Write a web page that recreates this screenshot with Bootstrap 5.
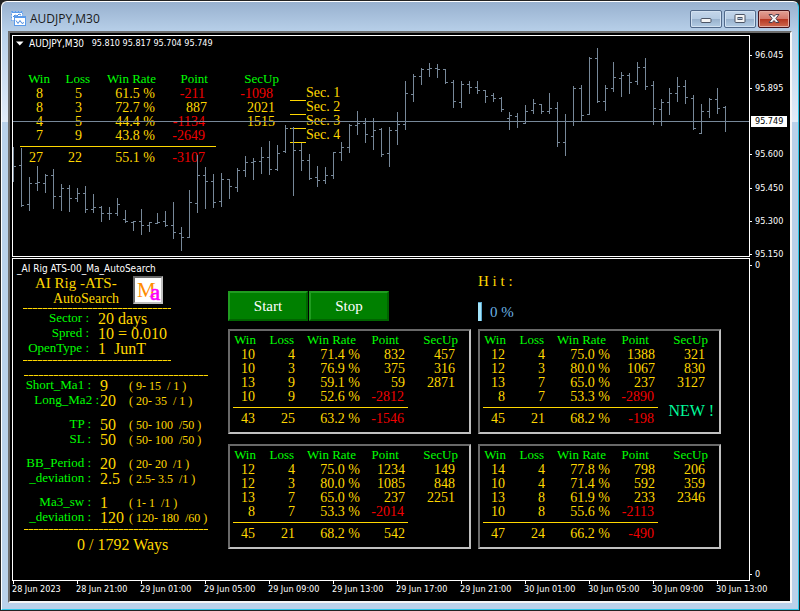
<!DOCTYPE html>
<html lang="en">
<head>
<meta charset="utf-8">
<meta name="viewport" content="width=device-width, initial-scale=1">
<title>AUDJPY,M30</title>
<link href="https://cdn.jsdelivr.net/npm/bootstrap@5.3.0/dist/css/bootstrap.min.css" rel="stylesheet">
<style>
  :root { --gold: #ffd700; --lime: #00ff00; --loss: #f00000; }
  body { background: #000; color: #fff; font-family: "Liberation Serif", "Times New Roman", serif; font-size: 14px; line-height: 14px; }
  .mdi { min-height: 100vh; padding: 1px 1px 1px; background: #222; }
  .mdi-frame {
    padding: 0 6px 6px; border: 1px solid #fff; border-right-color: #2fc8ea; border-bottom-color: #2fc8ea; border-radius: 6px 6px 0 0;
    background: linear-gradient(#98b1cf 0, #b9d1ea 31px, #e2ecf8 120px, #b9d1ea 120px);
  }
  .mdi-title { height: 29px; padding: 4px 2px 0 3px; color: #1a1a1a; font: 12px/16px "Open Sans", "Noto Sans", sans-serif; }
  .mdi-title h1 { font: inherit; }
  .win-btns { gap: 2px; }
  .win-btn {
    width: 32px; height: 18px; padding: 0; border: 1px solid #51698a; border-radius: 2px;
    background: linear-gradient(#c4d6ea 0, #b5cbe3 48%, #97b0cc 50%, #b3cce4 100%); box-shadow: inset 0 0 0 1px #d2e1f1;
  }
  .win-btn.shut { border-color: #47131a; background: linear-gradient(#e2a095 0, #d5796c 48%, #b5341f 50%, #cf6a50 100%); box-shadow: inset 0 0 0 1px #e5aca2; }
  .win-btn svg { display: block; margin: auto; }
  .client { padding: 2px 0 0 2px; background: #000; border: 2px solid; border-color: #6c6c6c #f6f6f6 #f6f6f6 #6c6c6c; }
  .tiny { font: 9px/11px "DejaVu Sans Condensed", "DejaVu Sans", sans-serif; color: #fff; }
  .caption { font-size: 10px; }
  .quote-line { left: 3px; top: 2px; gap: 5px; white-space: pre; }
  .pane { border: 1px solid #fff; min-width: 0; }
  .chart-pane { height: 222px; padding: 1px 0 0 7px; }
  .price-svg { inset: 0; pointer-events: none; }
  .axis { width: 40px; }
  .axis span { display: block; padding-left: 5px; position: relative; white-space: nowrap; }
  .axis span::before { content: ""; position: absolute; left: 0; top: 5px; width: 2px; height: 1px; background: #fff; }
  .axis .last-price { margin: 0 3px 0 1px; padding-left: 4px; background: #fff; color: #000; }
  .price-axis { padding-top: 15px; margin-bottom: -3px; }
  .level-axis { padding: 2px 0 1px; }
  .lower { margin-top: 1px; }
  .time-axis { display: grid; grid-template-columns: repeat(12, 1fr); margin-right: 10px; height: 20px; }
  .time-axis span { padding-top: 3px; position: relative; white-space: nowrap; }
  .time-axis span::before { content: ""; position: absolute; left: 1px; top: 0; width: 1px; height: 3px; background: #fff; }

  .stats { table-layout: fixed; border-collapse: separate; border-spacing: 0; color: var(--gold); text-align: right; white-space: nowrap; }
  .stats th, .stats td { padding: 0; height: 14px; line-height: 14px; }
  .stats thead th { height: 17px; font-size: 13px; line-height: 17px; font-weight: 400; color: var(--lime); padding-right: 1px; }
  .stats .rule { height: 8px; line-height: 0; }
  .stats hr { margin: 3px 0 4px 3px; width: 175px; border: 0; border-top: 1px solid var(--gold); opacity: 1; }
  .stats .neg { color: var(--loss); }
  .panel-stats { width: 229px; }
  .panel-stats td:nth-child(1) { padding-right: 2px; }
  .panel-stats thead th:nth-child(3) { padding-right: 4px; }
  .panel-stats thead th:nth-child(4) { padding-right: 6px; }
  .panel-stats td:nth-child(5) { padding-right: 4px; }
  .panel-stats .neg { padding-right: 1px; }
  .live-stats { width: 260px; margin-top: 21px; }
  .live-stats td:nth-child(1) { padding-right: 8px; }
  .live-stats td:nth-child(2) { padding-right: 9px; }
  .live-stats td:nth-child(3) { padding-right: 2px; }
  .live-stats td:nth-child(4) { padding-right: 2px; }
  .live-stats td:nth-child(5) { padding-right: 5px; }
  .live-stats td.neg:nth-child(4) { padding-right: 4px; }
  .live-stats td.neg:nth-child(5) { padding-right: 7px; }
  .live-stats hr { margin-left: 0; width: 196px; }
  .sectors { margin: 41px 0 0 10px; color: var(--gold); }
  .sectors li { display: flex; height: 14px; }
  .sectors li::before { content: ""; width: 16px; height: 15px; border-bottom: 1px solid var(--gold); }

  .side { width: 215px; padding: 4px 0 0 4px; color: var(--gold); }
  .brand { padding: 1px 0 0 18px; gap: 14px; height: 34px; }
  .brand-name { font-size: 15px; line-height: 16px; }
  .brand-sub { line-height: 15px; padding-left: 18px; }
  .brand svg { margin-top: 1px; }
  .dashes { height: 1px; background: repeating-linear-gradient(90deg, var(--gold) 0 4px, #8a7400 4px 5px); }
  .dashes.short { width: 148px; margin-left: 6px; }
  .dashes.long { width: 184px; margin-left: 7px; }
  .dashes.opening { margin-top: 14px; margin-bottom: 1px; }
  .fields { display: grid; grid-auto-rows: 15px; column-gap: 9px; line-height: 15px; white-space: pre; margin: 0; }
  .fields dt { font-size: 13px; font-weight: 400; color: var(--lime); text-align: right; }
  .fields dd { margin: 0; font-size: 16px; padding-top: 1px; }
  .fields .range { font-size: 12px; padding-top: 2px; }
  .info { grid-template-columns: 72px 1fr; margin: 1px 0 5px; }
  .params { grid-template-columns: 74px 20px 1fr; margin-bottom: 9px; }
  .params .wide { margin-right: -8px; }
  .params.closing { margin-bottom: 5px; }
  .ways { font-size: 16px; line-height: 18px; margin: 6px 0 0 60px; }

  .board { display: grid; grid-template-columns: 243px 243px; column-gap: 7px; row-gap: 10px; align-content: start; padding-top: 13px; }
  .ctl { height: 53px; margin-bottom: -6px; }
  .ctl-row { gap: 1px; }
  .ctl-btn { width: 80px; height: 30px; padding: 0; border: 2px solid; border-color: #209c20 #006400 #006400 #209c20; border-radius: 0; background: #008000; color: #fff; font-size: 15px; line-height: 26px; }
  .ctl-btn:hover { background: #0a8a0a; color: #fff; border-color: #209c20 #006400 #006400 #209c20; }
  .hit { color: var(--gold); font-size: 15px; line-height: 18px; }
  .hit-bar { width: 4px; height: 19px; background: #a4e4fa; border-right: 1px solid #5ba6cc; border-top: 1px solid #5ba6cc; }
  .hit-val { color: #6cb4e4; font-size: 15px; }
  .stat-panel { border: 2px solid; border-color: #696969 #c0c0c0 #c0c0c0 #696969; height: 105px; }
  .new-flag { position: absolute; right: 5px; bottom: 13px; color: #00fa9a; font-size: 16px; line-height: 16px; }
</style>
</head>
<body>
<div class="mdi d-flex flex-column">
  <div class="mdi-frame flex-grow-1 d-flex flex-column">
    <header class="mdi-title d-flex align-items-center">
      <svg width="15" height="15" viewBox="0 0 15 15" class="me-1" aria-hidden="true">
        <rect x=".5" y=".5" width="11" height="9" fill="#fff" stroke="#5b9bea" stroke-dasharray="2 1"/>
        <path d="M1 1.500h10" stroke="#5b9bea"/>
        <path d="M2 6l2-2 2 1 2-2 2 1" fill="none" stroke="#4a8be0"/>
        <rect x="3.500" y="5.500" width="11" height="9" fill="#fff" stroke="#5b9bea"/>
        <path d="M3 6h12" stroke="#5b9bea" stroke-width="2"/>
        <path d="M5 9.500l2 3 2-3 2 3 2-1" fill="none" stroke="#4a8be0"/>
      </svg>
      <h1 class="m-0 flex-grow-1">AUDJPY,M30</h1>
      <div class="win-btns d-flex">
        <button type="button" class="win-btn" aria-label="Minimize"><svg width="12" height="12" viewBox="0 0 12 12"><rect x="1" y="5.500" width="10" height="4" rx="1" fill="#f4f4f4" stroke="#4c5566"/></svg></button>
        <button type="button" class="win-btn" aria-label="Maximize"><svg width="12" height="12" viewBox="0 0 12 12"><rect x="1" y="1.500" width="10" height="8" rx="1" fill="#f4f4f4" stroke="#4c5566"/><rect x="4" y="4.500" width="4" height="2" fill="#a9c0da" stroke="#4c5566"/></svg></button>
        <button type="button" class="win-btn shut" aria-label="Close"><svg width="12" height="12" viewBox="0 0 12 12"><path d="M1 1.500h3.200L6 3.500l1.800-2H11L7.900 5.500 11 9.500H7.800L6 7.500l-1.800 2H1l3.100-4z" fill="#f4f4f4" stroke="#4c4050"/></svg></button>
      </div>
    </header>

    <main class="client flex-grow-1 d-flex flex-column">
      <section class="d-flex">
        <div class="pane chart-pane flex-grow-1 position-relative d-flex align-items-start">
          <div>
            <div class="quote-line tiny d-flex align-items-center position-absolute"><svg width="8" height="5" viewBox="0 0 8 5" aria-hidden="true"><path d="M0 .5h7.500L3.750 4.500z" fill="#fff"/></svg><span class="caption">AUDJPY,M30</span><span> 95.810 95.817 95.704 95.749</span></div>
            <div class="pt-2 mt-1">
              <table class="stats live-stats">
                <colgroup><col style="width:31px"><col style="width:40px"><col style="width:66px"><col style="width:52px"><col style="width:71px"></colgroup>
                <thead><tr><th>Win</th><th>Loss</th><th>Win Rate</th><th>Point</th><th>SecUp</th></tr></thead>
                <tbody>
                  <tr><td>8</td><td>5</td><td>61.5 %</td><td class="neg">-211</td><td class="neg">-1098</td></tr>
                  <tr><td>8</td><td>3</td><td>72.7 %</td><td>887</td><td>2021</td></tr>
                  <tr><td>4</td><td>5</td><td>44.4 %</td><td class="neg">-1134</td><td>1515</td></tr>
                  <tr><td>7</td><td>9</td><td>43.8 %</td><td class="neg">-2649</td><td></td></tr>
                </tbody>
                <tfoot>
                  <tr><td class="rule p-0" colspan="5"><hr></td></tr>
                  <tr><td>27</td><td>22</td><td>55.1 %</td><td class="neg">-3107</td><td></td></tr>
                </tfoot>
              </table>
            </div>
          </div>
          <ul class="sectors list-unstyled pt-2 mb-0">
            <li>Sec. 1</li><li>Sec. 2</li><li>Sec. 3</li><li>Sec. 4</li>
          </ul>
          <svg class="price-svg position-absolute w-100 h-100" viewBox="13 36 736 220" preserveAspectRatio="none" role="img" aria-label="AUDJPY 30 minute price bars">
            <path id="bars" fill="none" stroke="#778899" vector-effect="non-scaling-stroke"/>
            <path d="M13 121.500H749" stroke="#778899" vector-effect="non-scaling-stroke"/>
          </svg>
        </div>
        <div class="axis price-axis tiny d-flex flex-column justify-content-between">
          <span>96.045</span><span>95.895</span><span class="last-price">95.749</span><span>95.600</span><span>95.450</span><span>95.300</span><span>95.150</span>
        </div>
      </section>

      <section class="lower d-flex flex-grow-1">
        <div class="pane flex-grow-1 d-flex">
          <div class="side flex-shrink-0">
            <div class="tiny caption">_AI Rig ATS-00_Ma_AutoSearch</div>
            <div class="brand d-flex align-items-start">
              <div>
                <div class="brand-name">AI Rig -ATS-</div>
                <div class="brand-sub">AutoSearch</div>
              </div>
              <svg width="30" height="28" viewBox="0 0 30 28" role="img" aria-label="Ma">
                <rect width="30" height="28" fill="#c0c0c0"/>
                <path d="M0 28V0h30l-2 2H2v24z" fill="#696969"/>
                <rect x="2" y="2" width="26" height="24" fill="#fff"/>
                <text x="4" y="21" font-family="Liberation Serif, serif" font-size="21" fill="#ff8c00">M</text>
                <text x="17" y="24" font-family="Liberation Serif, serif" font-size="23" stroke="#ff00ff" stroke-width=".6" fill="#ff00ff">a</text>
              </svg>
            </div>
            <div class="dashes short"></div>
            <dl class="fields info">
              <dt>Sector :</dt><dd>20 days</dd>
              <dt>Spred :</dt><dd>10 = 0.010</dd>
              <dt>OpenType :</dt><dd>1  JunT</dd>
            </dl>
            <div class="dashes short"></div>
            <div class="dashes long opening"></div>
            <dl class="fields params">
              <dt>Short_Ma1 :</dt><dd>9</dd><dd class="range">( 9- 15  / 1 )</dd>
              <dt class="wide">Long_Ma2 :</dt><dd>20</dd><dd class="range">( 20- 35  / 1 )</dd>
            </dl>
            <dl class="fields params">
              <dt>TP :</dt><dd>50</dd><dd class="range">( 50- 100  /50 )</dd>
              <dt>SL :</dt><dd>50</dd><dd class="range">( 50- 100  /50 )</dd>
            </dl>
            <dl class="fields params">
              <dt>BB_Period :</dt><dd>20</dd><dd class="range">( 20- 20  /1 )</dd>
              <dt>_deviation :</dt><dd>2.5</dd><dd class="range">( 2.5- 3.5  /1 )</dd>
            </dl>
            <dl class="fields params closing">
              <dt>Ma3_sw :</dt><dd>1</dd><dd class="range">( 1- 1  /1 )</dd>
              <dt>_deviation :</dt><dd>120</dd><dd class="range">( 120- 180  /60 )</dd>
            </dl>
            <div class="dashes long"></div>
            <div class="ways">0 / 1792 Ways</div>
          </div>

          <div class="board">
            <div class="ctl ctl-row d-flex align-items-end pb-1">
              <button type="button" class="btn ctl-btn">Start</button>
              <button type="button" class="btn ctl-btn">Stop</button>
            </div>
            <div class="ctl d-flex flex-column justify-content-between pb-1">
              <div class="hit">H i t :</div>
              <div class="d-flex align-items-center gap-2">
                <div class="hit-bar" role="progressbar" aria-label="Hit" aria-valuenow="0" aria-valuemin="0" aria-valuemax="100"></div>
                <div class="hit-val">0 %</div>
              </div>
            </div>
            <div class="stat-panel" data-panel="0"></div>
            <div class="stat-panel position-relative" data-panel="1"><div class="new-flag">NEW !</div></div>
            <div class="stat-panel" data-panel="2"></div>
            <div class="stat-panel" data-panel="3"></div>
          </div>
        </div>
        <div class="axis level-axis tiny d-flex flex-column justify-content-between">
          <span>0</span><span>0</span>
        </div>
      </section>

      <div class="time-axis tiny">
        <span>28 Jun 2023</span><span>28 Jun 21:00</span><span>29 Jun 01:00</span><span>29 Jun 05:00</span><span>29 Jun 09:00</span><span>29 Jun 13:00</span><span>29 Jun 17:00</span><span>29 Jun 21:00</span><span>30 Jun 01:00</span><span>30 Jun 05:00</span><span>30 Jun 09:00</span><span>30 Jun 13:00</span>
      </div>
    </main>
  </div>
</div>

<script src="https://cdn.jsdelivr.net/npm/bootstrap@5.3.0/dist/js/bootstrap.bundle.min.js"></script>
<script>
  // Each bar: high, low, open, close; one bar every 8 units.
  const series = [
    [147,181,166,166],[148,206,165,205],[177,210,204,183],[166,190,183,182],[174,192,183,175],[169,208,175,196],[184,210,196,188],[185,211,188,198],
    [188,201,198,193],[186,212,193,209],[194,212,209,207],[206,221,207,213],[207,219,213,213],[198,215,213,204],[210,222,219,221],[221,230,222,221],
    [209,234,221,225],[222,231,225,222],[213,223,223,222],[211,226,221,225],[202,238,225,232],[227,250,233,237],[190,237,237,202],[155,212,203,175],
    [167,208,175,181],[174,207,181,202],[173,206,201,179],[179,198,179,186],[168,191,187,170],[156,176,170,162],[158,179,162,161],[147,173,161,157],
    [141,174,157,169],[145,170,169,153],[125,152,151,128],[127,195,128,150],[143,170,150,160],[154,179,160,178],[166,186,177,180],[167,183,180,175],
    [152,178,175,152],[142,160,152,147],[124,152,147,125],[111,134,125,123],[118,142,123,134],[118,149,136,130],[128,156,129,154],[127,166,153,130],
    [112,144,130,124],[81,129,124,93],[74,101,94,76],[68,84,76,69],[63,76,69,68],[64,77,68,69],[69,83,69,82],[80,107,82,101],
    [81,107,102,84],[81,93,84,87],[81,93,87,90],[90,102,90,96],[93,101,95,98],[97,111,98,109],[112,129,118,115],[113,127,116,121],
    [105,123,123,111],[99,113,110,103],[104,113,104,111],[93,113,111,108],[102,146,108,142],[114,155,142,121],[86,125,121,88],[85,121,88,115],
    [57,114,114,58],[48,102,58,101],[85,110,101,88],[62,91,88,77],[72,96,78,75],[73,93,75,82],[62,84,81,67],[58,89,67,86],
    [81,124,85,108],[99,125,109,102],[88,114,102,93],[77,101,93,86],[80,103,86,97],[95,129,98,128],[104,133,133,111],[98,117,111,99],
    [88,113,99,108],[106,131,107,121]
  ];
  document.getElementById('bars').setAttribute('d', series.map(([h, l, o, c], i) => {
    const x = 13.5 + i * 8;
    return `M${x} ${h}V${l + 1}M${x - 2.5} ${o + .5}H${x}M${x} ${c + .5}H${x + 2.5}`;
  }).join(''));

  const panels = [
    [['10','4','71.4 %','832','457'],['10','3','76.9 %','375','316'],['13','9','59.1 %','59','2871'],['10','9','52.6 %','-2812',''],['43','25','63.2 %','-1546','']],
    [['12','4','75.0 %','1388','321'],['12','3','80.0 %','1067','830'],['13','7','65.0 %','237','3127'],['8','7','53.3 %','-2890',''],['45','21','68.2 %','-198','']],
    [['12','4','75.0 %','1234','149'],['12','3','80.0 %','1085','848'],['13','7','65.0 %','237','2251'],['8','7','53.3 %','-2014',''],['45','21','68.2 %','542','']],
    [['14','4','77.8 %','798','206'],['10','4','71.4 %','592','359'],['13','8','61.9 %','233','2346'],['10','8','55.6 %','-2113',''],['47','24','66.2 %','-490','']]
  ];
  const row = cells => '<tr>' + cells.map(v => `<td${v.startsWith('-') ? ' class="neg"' : ''}>${v}</td>`).join('') + '</tr>';
  document.querySelectorAll('[data-panel]').forEach(el => {
    const rows = panels[el.dataset.panel];
    el.insertAdjacentHTML('afterbegin',
      `<table class="stats panel-stats"><colgroup>${[27, 38, 65, 45, 54].map(w => `<col style="width:${w}px">`).join('')}</colgroup>
       <thead><tr><th>Win</th><th>Loss</th><th>Win Rate</th><th>Point</th><th>SecUp</th></tr></thead>
       <tbody>${rows.slice(0, 4).map(row).join('')}</tbody>
       <tfoot><tr><td class="rule p-0" colspan="5"><hr></td></tr>${row(rows[4])}</tfoot></table>`);
  });
</script>
</body>
</html>
